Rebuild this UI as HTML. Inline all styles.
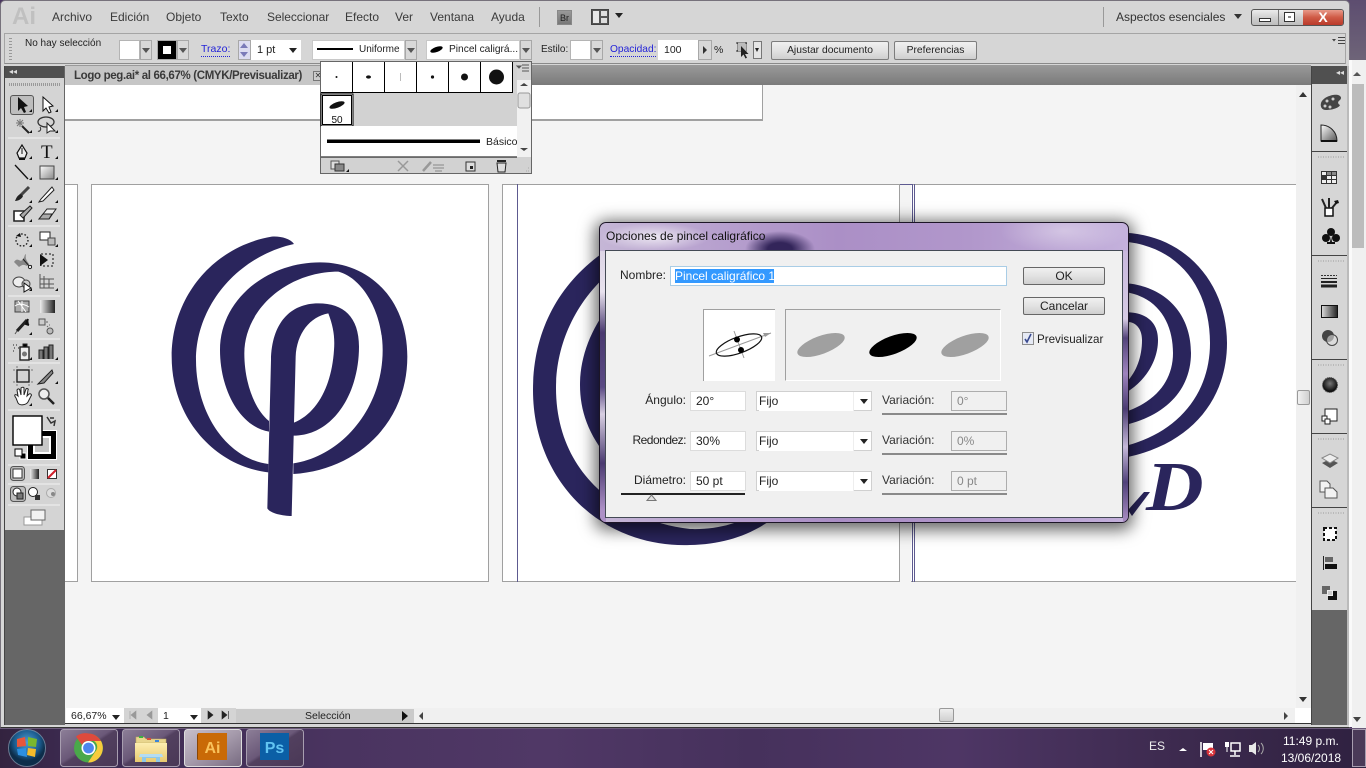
<!DOCTYPE html>
<html lang="es"><head><meta charset="utf-8"><title>Adobe Illustrator</title>
<style>
*{box-sizing:border-box}
html,body{margin:0;padding:0;width:1366px;height:768px;overflow:hidden;background:#4a3560;font-family:"Liberation Sans",sans-serif;color:#222}
.a{position:absolute}
.t{position:absolute;white-space:nowrap;line-height:14px}
.m{position:absolute;top:10px;font-size:12px;color:#3a3a3a;line-height:14px;white-space:nowrap}
.box{position:absolute;background:#fff;border:1px solid #b4b4b4}
.arr{position:absolute;background:#d8d8d8;border:1px solid #a8a8a8}
.tri{position:absolute;width:0;height:0;border-left:4px solid transparent;border-right:4px solid transparent;border-top:5px solid #222}
.btn{position:absolute;background:linear-gradient(#f0f0f0,#e2e2e2 50%,#cfcfcf);border:1px solid #7d7d7d;border-radius:2px;text-align:center;font-size:10.3px;line-height:17px;color:#222}
.dlg{position:absolute;font-size:12px;color:#222;line-height:14px;white-space:nowrap}
.inp{position:absolute;background:#fff;border:1px solid #dcdcdc;font-size:12px;line-height:19px;padding-left:5px;height:20px;color:#222}
.cell{position:absolute;top:62px;width:32px;height:31px;background:#fff;border-right:1px solid #000;border-bottom:1px solid #000}
</style></head><body>

<!-- desktop behind -->
<div class="a" style="left:1340px;top:0;width:26px;height:60px;background:linear-gradient(#5d4d70,#6e6478)"></div>
<div class="a" style="left:1352px;top:60px;width:14px;height:668px;background:#f0f0f0"></div>
<div class="a" style="left:1352px;top:84px;width:12px;height:164px;background:#bcbcbc"></div>
<div class="tri" style="left:1353px;top:72px;border-top:0;border-bottom:4px solid #555;border-left-width:4px;border-right-width:4px"></div>
<div class="tri" style="left:1353px;top:717px;border-top-color:#444"></div>

<!-- window -->
<div class="a" style="left:0;top:0;width:1350px;height:728px;background:#d6d6d6;border:1px solid #77727c;border-radius:5px 5px 0 0;border-bottom:1px solid #333"></div>
<div class="a" style="left:1349px;top:60px;width:3px;height:667px;background:#fafafa"></div>

<!-- menu bar -->
<div class="t" style="left:12px;top:4px;font-size:24px;line-height:26px;font-weight:bold;color:#c0c0c0">Ai</div>
<div class="m" style="left:52px">Archivo</div>
<div class="m" style="left:110px">Edición</div>
<div class="m" style="left:166px">Objeto</div>
<div class="m" style="left:220px">Texto</div>
<div class="m" style="left:267px;letter-spacing:-.05px">Seleccionar</div>
<div class="m" style="left:345px">Efecto</div>
<div class="m" style="left:395px">Ver</div>
<div class="m" style="left:430px">Ventana</div>
<div class="m" style="left:491px">Ayuda</div>
<div class="a" style="left:539px;top:7px;width:1px;height:20px;background:#999"></div>
<div class="t" style="left:557px;top:10px;width:15px;height:15px;background:linear-gradient(#999,#777);font-size:9px;line-height:14px;text-align:center;color:#222;border:1px solid #888">Br</div>
<div class="a" style="left:591px;top:9px;width:18px;height:16px;background:#555;border:1px solid #444"></div>
<div class="a" style="left:593px;top:11px;width:6px;height:12px;background:#e8e8e8"></div>
<div class="a" style="left:601px;top:11px;width:6px;height:5px;background:#ddd"></div>
<div class="a" style="left:601px;top:18px;width:6px;height:5px;background:#ddd"></div>
<div class="tri" style="left:615px;top:13px"></div>
<div class="a" style="left:1103px;top:7px;width:1px;height:20px;background:#999"></div>
<div class="m" style="left:1116px;color:#333;font-size:12px">Aspectos esenciales</div>
<div class="tri" style="left:1234px;top:14px;border-top-color:#333"></div>
<!-- window buttons -->
<div class="a" style="left:1251px;top:9px;width:93px;height:17px;background:linear-gradient(#ececec,#d0d0d0 50%,#bdbdbd);border:1px solid #555;border-radius:3px;overflow:hidden">
 <div class="a" style="left:26px;top:0;width:1px;height:15px;background:#777"></div>
 <div class="a" style="left:51px;top:0;width:40px;height:15px;background:linear-gradient(#e89a8a,#cf5a45 50%,#b93a2a)"></div>
 <div class="a" style="left:7px;top:8px;width:12px;height:4px;background:#fff;border:1px solid #333"></div>
 <div class="a" style="left:32px;top:2px;width:11px;height:10px;background:#fff;border:1px solid #333"></div>
 <div class="a" style="left:36px;top:6px;width:3px;height:2px;background:#888"></div>
 <div class="t" style="left:51px;top:0;width:40px;text-align:center;font-size:14px;line-height:15px;font-weight:bold;color:#fff">X</div>
</div>

<!-- control bar -->
<div class="a" style="left:4px;top:33px;width:1342px;height:31px;background:#d6d6d6;border:1px solid #a5a5a5;border-bottom:1px solid #8a8a8a"></div>
<div class="a" style="left:9px;top:38px;width:3px;height:22px;background:repeating-linear-gradient(#999 0 1px,transparent 1px 3px)"></div>
<div class="t" style="left:25px;top:37px;font-size:10px">No hay selección</div>
<div class="box" style="left:119px;top:40px;width:21px;height:20px"></div>
<div class="arr" style="left:140px;top:40px;width:12px;height:20px"></div><div class="tri" style="left:142px;top:48px;border-top-color:#555"></div>
<div class="a" style="left:157px;top:40px;width:20px;height:20px;background:#000;border:1px solid #aaa"></div>
<div class="a" style="left:163px;top:46px;width:8px;height:8px;background:#fff"></div>
<div class="arr" style="left:177px;top:40px;width:12px;height:20px"></div><div class="tri" style="left:179px;top:48px;border-top-color:#555"></div>
<div class="t" style="left:201px;top:43px;font-size:10.5px;color:#2323d8;border-bottom:1px dotted #2323d8;line-height:13px">Trazo:</div>
<div class="arr" style="left:238px;top:40px;width:13px;height:20px;background:#dcdcf0"></div>
<div class="tri" style="left:240px;top:43px;border-top:0;border-bottom:5px solid #7a7ab8"></div>
<div class="tri" style="left:240px;top:52px;border-top-color:#7a7ab8"></div>
<div class="a" style="left:251px;top:40px;width:50px;height:20px;background:#fff"></div>
<div class="t" style="left:257px;top:43px;font-size:11px">1 pt</div>
<div class="tri" style="left:289px;top:48px"></div>
<div class="box" style="left:312px;top:40px;width:93px;height:20px;border-color:#c8c8c8"></div>
<div class="a" style="left:317px;top:48px;width:36px;height:2px;background:#000"></div>
<div class="t" style="left:359px;top:43px;font-size:10px">Uniforme</div>
<div class="arr" style="left:405px;top:40px;width:12px;height:20px"></div><div class="tri" style="left:407px;top:48px;border-top-color:#555"></div>
<div class="box" style="left:426px;top:40px;width:94px;height:20px;border-color:#c8c8c8"></div>
<div class="a" style="left:430px;top:47px;width:13px;height:5px;border-radius:50%;background:#000;transform:rotate(-20deg)"></div>
<div class="t" style="left:449px;top:43px;font-size:10.2px">Pincel caligrá...</div>
<div class="arr" style="left:520px;top:40px;width:12px;height:20px"></div><div class="tri" style="left:522px;top:48px;border-top-color:#555"></div>
<div class="t" style="left:541px;top:43px;font-size:10px">Estilo:</div>
<div class="box" style="left:570px;top:40px;width:21px;height:20px"></div>
<div class="arr" style="left:591px;top:40px;width:12px;height:20px"></div><div class="tri" style="left:593px;top:48px;border-top-color:#555"></div>
<div class="t" style="left:610px;top:43px;font-size:10.2px;color:#2323d8;border-bottom:1px dotted #2323d8;line-height:13px">Opacidad:</div>
<div class="a" style="left:658px;top:40px;width:40px;height:20px;background:#fff"></div>
<div class="t" style="left:664px;top:43px;font-size:10.5px">100</div>
<div class="arr" style="left:698px;top:40px;width:14px;height:20px"></div>
<div class="a" style="left:703px;top:46px;width:0;height:0;border-top:4px solid transparent;border-bottom:4px solid transparent;border-left:4px solid #333"></div>
<div class="t" style="left:714px;top:43px;font-size:10.5px">%</div>
<svg class="a" style="left:733px;top:40px" width="20" height="22" viewBox="733 40 20 22">
 <rect x="737.500" y="42.500" width="9" height="9" fill="#bbb" stroke="#555" stroke-dasharray="1 1"/>
 <path d="M736 43h2M745 43h2M736 51h2" stroke="#333"/>
 <path d="M741 46v11l2.500-2.500 2 4 1.500-.8-2-3.700h3.500z" fill="#222"/>
</svg>
<div class="a" style="left:753px;top:41px;width:9px;height:18px;background:#e5e5e5;border:1px solid #777"></div><div class="tri" style="left:755px;top:48px;border-left-width:2.5px;border-right-width:2.5px;border-top-width:4px"></div>
<div class="btn" style="left:771px;top:41px;width:118px;height:19px">Ajustar documento</div>
<div class="btn" style="left:894px;top:41px;width:83px;height:19px">Preferencias</div>
<svg class="a" style="left:1330px;top:34px" width="16" height="14"><path d="M2 5h4l-2 2.500z" fill="#444"/><path d="M8 3.500h7M8 6.500h7M8 9.500h7" stroke="#444"/></svg>

<!-- tab bar -->
<div class="a" style="left:65px;top:65px;width:1246px;height:20px;background:linear-gradient(#9a9a9a,#7a7a7a)"></div>
<div class="a" style="left:65px;top:66px;width:260px;height:19px;background:#c6c6c6"></div>
<div class="t" style="left:74px;top:69px;font-size:11.5px;font-weight:bold;color:#3a3a3a;letter-spacing:-.03em">Logo peg.ai* al 66,67% (CMYK/Previsualizar)</div>
<div class="a" style="left:313px;top:71px;width:10px;height:10px;border:1px solid #777;background:#ccc;font-size:8px;line-height:8px;text-align:center;color:#333">✕</div>

<!-- document area -->
<div class="a" style="left:65px;top:85px;width:1231px;height:623px;background:#f4f4f4;overflow:hidden">
 <div class="a" style="left:-1px;top:-1px;width:699px;height:37px;background:#fff;border:1px solid #a0a0a0;border-bottom-width:2px"></div>
 <div class="a" style="left:-1px;top:99px;width:14px;height:398px;background:#fff;border:1px solid #a0a0a0;border-left:0"></div>
 <div class="a" style="left:26px;top:99px;width:398px;height:398px;background:#fff;border:1px solid #a0a0a0"></div>
 <div class="a" style="left:437px;top:99px;width:398px;height:398px;background:#fff;border:1px solid #a0a0a0"></div>
 <div class="a" style="left:846px;top:99px;width:402px;height:398px;background:#fff;border:1px solid #a0a0a0;border-left:0;border-right:0"></div>
 <div class="a" style="left:452px;top:99px;width:1px;height:398px;background:#5d5a90"></div>
 <div class="a" style="left:835px;top:99px;width:12px;height:1px;background:#5d5a90"></div>
 <div class="a" style="left:847px;top:99px;width:1px;height:398px;background:#5d5a90"></div>
 <div class="a" style="left:849px;top:99px;width:1px;height:398px;background:#5d5a90"></div>
</div>

<!-- artwork -->
<svg class="a" style="left:0;top:0" width="1296" height="708" viewBox="0 0 1296 708">
 <g fill="#2a255c">
  <g transform="translate(130 210) scale(.33333)">
   <path d="M492,102C480,85 450,78 425,80C250,110 125,260 125,440C125,630 260,770 415,787L415,762C290,745 198,610 198,450C198,290 320,140 492,102Z"/>
   <path d="M490,792C680,780 832,640 832,440C832,270 720,157 570,157C410,157 270,270 270,420C270,540 330,650 417,665L417,633C375,600 343,520 343,430C343,300 470,185 625,185C700,205 758,310 758,420C758,600 630,740 490,760Z"/>
   <path d="M490,677C610,677 687,550 687,410C687,320 640,280 565,280C480,280 425,340 423,450L412,895C420,910 460,918 485,918L492,638L497,440C500,370 540,320 595,310C610,350 615,380 612,420C605,530 560,610 492,638Z"/>
  </g>
  <!-- middle logo, visible behind dialog -->
  <path d="M610,248C560,280 533,330 533,390C533,480 600,548 690,545C730,544 760,532 790,505L770,505C745,522 720,530 690,529C615,520 556,470 556,388C556,345 575,300 615,268Z"/>
  <path d="M610,305C590,330 580,358 580,385C580,410 588,435 610,460L610,430C603,415 600,400 600,385C600,365 603,350 610,335Z"/>
  <!-- right logo -->
  <path d="M1110,233C1180,228 1227,280 1227,343C1227,400 1190,450 1110,460L1110,449C1170,440 1210,400 1210,343C1210,285 1175,240 1110,241Z"/>
  <path d="M1110,283C1160,280 1191,310 1191,353C1191,390 1165,420 1110,428L1110,416C1150,408 1173,385 1173,353C1173,320 1155,290 1110,291Z"/>
  <path d="M1110,314C1140,308 1158,318 1158,340C1158,365 1140,390 1110,400L1110,394C1130,385 1142,365 1142,340C1142,328 1135,322 1128,322L1110,326Z"/>
  <path d="M1132,516L1150,492L1144,492L1128,510Z"/>
 </g>
 <text x="0" y="0" transform="translate(1146 510) scale(1.14 1)" font-family="Liberation Serif,serif" font-style="italic" font-weight="bold" font-size="70" fill="#2a255c">D</text>
</svg>

<!-- vertical scrollbar -->
<div class="a" style="left:1296px;top:85px;width:15px;height:623px;background:#f0f0f0"></div>
<div class="tri" style="left:1299px;top:92px;border-top:0;border-bottom:5px solid #333"></div>
<div class="tri" style="left:1299px;top:697px;border-top-color:#333"></div>
<div class="a" style="left:1297px;top:390px;width:13px;height:15px;background:linear-gradient(90deg,#f2f2f2,#d0d0d0);border:1px solid #9a9a9a;border-radius:2px"></div>

<!-- status bar -->
<div class="a" style="left:65px;top:708px;width:1246px;height:16px;background:#f0f0f0;border-bottom:1px solid #333"></div>
<div class="a" style="left:66px;top:708px;width:58px;height:15px;background:#fff"></div>
<div class="t" style="left:71px;top:709px;font-size:10.5px">66,67%</div>
<div class="tri" style="left:112px;top:715px"></div>
<div class="a" style="left:124px;top:708px;width:34px;height:15px;background:#d4d4d4"></div>
<div class="a" style="left:158px;top:708px;width:43px;height:15px;background:#fff"></div>
<div class="t" style="left:163px;top:709px;font-size:10.5px">1</div>
<div class="tri" style="left:190px;top:715px"></div>
<div class="a" style="left:201px;top:708px;width:35px;height:15px;background:#d4d4d4"></div>
<svg class="a" style="left:124px;top:708px" width="112" height="15" viewBox="124 708 112 15">
 <path d="M130 711v8M136 711v8l-5-4zM152 711v8l-5-4z" fill="#999" stroke="#999" stroke-width=".6"/>
 <path d="M208 711v8l5-4zM222 711v8l5-4zM228.500 711v8" fill="#222" stroke="#222" stroke-width=".6"/>
</svg>
<div class="a" style="left:236px;top:709px;width:178px;height:14px;background:#cacaca"></div>
<div class="t" style="left:305px;top:709px;font-size:10.5px">Selección</div>
<div class="a" style="left:402px;top:711px;width:0;height:0;border-top:5px solid transparent;border-bottom:5px solid transparent;border-left:6px solid #111"></div>
<div class="a" style="left:419px;top:712px;width:0;height:0;border-top:4px solid transparent;border-bottom:4px solid transparent;border-right:4px solid #444"></div>
<div class="a" style="left:1284px;top:712px;width:0;height:0;border-top:4px solid transparent;border-bottom:4px solid transparent;border-left:4px solid #444"></div>
<div class="a" style="left:939px;top:708px;width:15px;height:14px;background:linear-gradient(#eee,#cfcfcf);border:1px solid #999;border-radius:2px"></div>
<div class="a" style="left:1295px;top:708px;width:16px;height:16px;background:#fff;border-bottom:1px solid #333"></div>

<!-- left toolbar -->
<div class="a" style="left:4px;top:66px;width:61px;height:659px;background:#666;border-left:1px solid #444"></div>
<div class="a" style="left:5px;top:66px;width:59px;height:12px;background:#505050"></div>
<div class="t" style="left:9px;top:66px;font-size:8px;line-height:12px;color:#ddd">◂◂</div>
<div class="a" style="left:5px;top:78px;width:59px;height:452px;background:#d4d4d4"></div>
<div class="a" style="left:9px;top:83px;width:51px;height:3px;background:repeating-linear-gradient(90deg,#999 0 1px,transparent 1px 2px)"></div>
<div class="a" style="left:10px;top:95px;width:24px;height:20px;background:#bdbdbd;border:1px solid #555;border-radius:3px"></div>

<svg class="a" style="left:0;top:0" width="70" height="540" viewBox="0 0 70 540">
 <g stroke="#f2f2f2" stroke-width="1">
  <path d="M8 138H60M8 226H60M8 296H60M8 339H60M8 363H60M8 410H60M8 465H60M8 484H60M8 505H60"/>
 </g>
 <g fill="#111" stroke="none">
  <path d="M18 97L18 111L21 108L24 113L26 112L24 107L28 106Z"/>
  <path d="M43 97L43 111L46 108L49 113L51 112L49 107L53 106Z" fill="#fff" stroke="#111"/>
  <path d="M29 112h3v-3zM55 112h3v-3zM29 133h3v-3zM55 133h3v-3zM29 159h3v-3zM55 159h3v-3zM29 180h3v-3zM55 180h3v-3zM29 203h3v-3zM55 203h3v-3zM55 222h3v-3zM29 222h3v-3zM29 247h3v-3zM55 247h3v-3zM29 268h3v-3zM29 291h3v-3zM55 291h3v-3zM29 335h3v-3zM29 360h3v-3zM55 360h3v-3zM55 384h3v-3zM29 406h3v-3z"/>
 </g>
 <!-- wand, lasso -->
 <path d="M22 126L29 133" stroke="#222" stroke-width="2"/>
 <path d="M20 119v8M16 123h8M17 120l6 6M23 120l-6 6" stroke="#777" stroke-width="1"/>
 <ellipse cx="46" cy="122" rx="8" ry="5" fill="none" stroke="#333" stroke-width="1.3"/>
 <path d="M40 127c2 3-1 5-2 4" fill="none" stroke="#333"/>
 <path d="M47 123l0 10 3-2 5 0z" fill="#fff" stroke="#222"/>
 <!-- pen, T -->
 <path d="M22 145L17 153L19 158H25L27 153Z" fill="#eee" stroke="#111" stroke-width="1.2"/>
 <path d="M22 148V154" stroke="#111"/><rect x="19" y="158" width="6" height="2" fill="#111"/>
 <text x="41" y="158" font-family="Liberation Serif,serif" font-size="19" fill="#111">T</text>
 <!-- line, rect -->
 <path d="M15 165L28 179" stroke="#111" stroke-width="1.3"/>
 <rect x="40" y="166" width="14" height="13" fill="url(#g1)" stroke="#444"/>
 <!-- brush, pencil -->
 <path d="M29 187L20 196" stroke="#444" stroke-width="3"/><path d="M21 194c-4 1-5 5-6 7c3 0 7-2 8-5z" fill="#222"/>
 <path d="M52 187L41 199L39 202L43 201L54 190Z" fill="#fff" stroke="#222"/>
 <!-- blob, eraser -->
 <path d="M14 211H24V221H14Z" fill="#fff" stroke="#222" stroke-width="1.6"/><path d="M20 215L30 206L32 208L23 218Z" fill="#aaa" stroke="#222"/>
 <path d="M39 219L47 209H56L49 219Z" fill="#eee" stroke="#222"/><path d="M39 219L43 214H52L49 219Z" fill="#aaa" stroke="#222"/>
 <!-- rotate, scale -->
 <circle cx="22" cy="240" r="6" fill="none" stroke="#222" stroke-dasharray="1.6 1.8" stroke-width="1.4"/><path d="M16 236l4-3 1 4z" fill="#111"/>
 <rect x="40" y="232" width="10" height="8" fill="#fff" stroke="#222"/><rect x="48" y="238" width="7" height="7" fill="#bbb" stroke="#444"/>
 <!-- warp, free transform -->
 <path d="M14 262c4-6 6 2 9-3c2-2 1-4 3-5c-1 5 1 7 3 10l-2 2c-4-2-5-1-8 1z" fill="#888"/><path d="M23 259l7 8" stroke="#222"/><circle cx="30" cy="267" r="1.6" fill="#fff" stroke="#222"/>
 <rect x="41" y="254" width="12" height="12" fill="none" stroke="#111" stroke-dasharray="2 2"/><path d="M40 254v12l8-6z" fill="#111"/>
 <!-- shape builder, perspective -->
 <ellipse cx="19" cy="282" rx="6" ry="5" fill="#eee" stroke="#444"/><circle cx="26" cy="284" r="4" fill="#ccc" stroke="#444"/><path d="M24 283l0 9 7-4z" fill="#fff" stroke="#111"/>
 <path d="M40 274v14h14M44 276v12M49 279v9M40 279h14M40 284h14" fill="none" stroke="#555"/>
 <!-- mesh, gradient -->
 <rect x="15" y="301" width="14" height="11" fill="#aaa" stroke="#444"/><path d="M15 306c4-3 9-2 14 1M22 301v11M18 301l8 11" fill="none" stroke="#fff"/>
 <rect x="40" y="300" width="15" height="13" fill="url(#g2)"/>
 <!-- eyedropper, blend -->
 <path d="M27 320L17 331" stroke="#222" stroke-width="3"/><path d="M28 319l-2 5 3 1" fill="#111" stroke="#111" stroke-width="2"/><path d="M17 331l-2 3" stroke="#555"/>
 <rect x="39" y="319" width="6" height="6" fill="#ccc" stroke="#555"/><circle cx="50" cy="331" r="3" fill="#bbb" stroke="#555"/><path d="M46 322h2M49 325h1M47 326l1 1" stroke="#666"/>
 <!-- spray, graph -->
 <rect x="20" y="347" width="9" height="13" fill="#eee" stroke="#222" stroke-width="1.4"/><circle cx="24.500" cy="354" r="2.500" fill="#777"/><path d="M23 344h4v3h-4zM13 345h1M16 345h1M14 348h1M18 348h1M13 351h1" stroke="#222"/>
 <path d="M39 359V350h4V359M44 359V347h4V359M49 359V345h4V359" fill="#777" stroke="#222"/>
 <!-- artboard, slice -->
 <rect x="17" y="370" width="12" height="12" fill="none" stroke="#222" stroke-width="1.4"/><path d="M15 370h-2M33 370h-2M15 382h-2M33 382h-2M17 368v-2M29 368v-2M17 386v-2M29 386v-2" stroke="#777"/>
 <path d="M52 370L40 382L38 384L44 383L53 373Z" fill="#888" stroke="#222"/>
 <!-- hand, zoom -->
 <path d="M16 398c-3-4 0-4 2-2l-1-6c1-2 3-1 3 1l1 4 0-7c1-1 3-1 3 0l0 7 2-6c1-1 3 0 2 1l-1 6 2-2c2-1 3 1 2 2l-3 6c-2 3-8 4-10 1z" fill="#fff" stroke="#222"/>
 <circle cx="44" cy="394" r="5" fill="#eee" stroke="#555" stroke-width="1.5"/><path d="M48 398l6 6" stroke="#222" stroke-width="2.500"/>
 <!-- fill stroke -->
 <rect x="27.500" y="430.500" width="29" height="29" fill="#000" stroke="#fff"/>
 <rect x="34" y="437" width="16" height="16" fill="#c8c8c8" stroke="#fff" stroke-width="2"/>
 <rect x="13" y="416" width="29" height="29" fill="#fff" stroke="#000" stroke-width="1.400"/>
 <path d="M47 417l4 6 4-2 -1 5M50 418l4 0" fill="none" stroke="#333" stroke-width="1.500"/>
 <rect x="20" y="453" width="6" height="6" fill="#000" stroke="#fff"/><rect x="15" y="449" width="7" height="7" fill="#fff" stroke="#000"/>
 <!-- color modes -->
 <rect x="10.500" y="466.500" width="14" height="14" rx="3" fill="#bdbdbd" stroke="#555"/><rect x="13" y="469" width="9" height="9" fill="#fff" stroke="#333"/>
 <rect x="30" y="469" width="9" height="10" fill="url(#g2)"/>
 <rect x="47.500" y="469.500" width="9" height="9" fill="#fff" stroke="#333"/><path d="M48 478L56 470" stroke="#d0202a" stroke-width="2"/>
 <!-- draw modes -->
 <rect x="10.500" y="486.500" width="15" height="15" rx="3" fill="#bdbdbd" stroke="#555"/>
 <circle cx="17" cy="492" r="4" fill="#fff" stroke="#222"/><rect x="17" y="493" width="6" height="6" fill="#777" stroke="#222"/>
 <circle cx="33" cy="492" r="4.500" fill="#fff" stroke="#222"/><rect x="35" y="495" width="5" height="5" fill="#333"/>
 <circle cx="51" cy="493" r="4.500" fill="#ddd" stroke="#aaa"/><circle cx="53" cy="494" r="2" fill="#888"/>
 <!-- screen mode -->
 <rect x="24" y="517" width="18" height="8" fill="#fff" stroke="#999"/><rect x="31" y="510" width="14" height="10" fill="#f2f2f2" stroke="#666"/>
 <defs>
  <linearGradient id="g1" x1="0" y1="0" x2="1" y2="1"><stop offset="0" stop-color="#fff"/><stop offset="1" stop-color="#888"/></linearGradient>
  <linearGradient id="g2"><stop offset="0" stop-color="#eee"/><stop offset="1" stop-color="#222"/></linearGradient>
 </defs>
</svg>

<!-- right dock -->
<div class="a" style="left:1311px;top:66px;width:37px;height:659px;background:#666;border-left:1px solid #444"></div>
<div class="a" style="left:1312px;top:66px;width:36px;height:18px;background:#505050"></div>
<div class="t" style="left:1336px;top:67px;font-size:8px;line-height:12px;color:#ddd">◂◂</div>
<div class="a" style="left:1312px;top:84px;width:35px;height:526px;background:#d6d6d6"></div>
<div class="a" style="left:1347px;top:66px;width:2px;height:659px;background:#bbb"></div>
<div class="a" style="left:1312px;top:151px;width:35px;height:1px;background:#444"></div>
<div class="a" style="left:1312px;top:255px;width:35px;height:1px;background:#444"></div>
<div class="a" style="left:1312px;top:359px;width:35px;height:1px;background:#444"></div>
<div class="a" style="left:1312px;top:433px;width:35px;height:1px;background:#444"></div>
<div class="a" style="left:1312px;top:507px;width:35px;height:1px;background:#444"></div>
<svg class="a" style="left:1312px;top:84px" width="36" height="530" viewBox="1312 84 36 530">
 <defs>
  <linearGradient id="g3" x1="0" y1="0" x2="1" y2="1"><stop offset="0" stop-color="#fff"/><stop offset="1" stop-color="#555"/></linearGradient>
  <linearGradient id="g4"><stop offset="0" stop-color="#222"/><stop offset="1" stop-color="#ddd"/></linearGradient>
  <radialGradient id="g5" cx=".5" cy=".4"><stop offset="0" stop-color="#777"/><stop offset="1" stop-color="#111"/></radialGradient>
 </defs>
 <path d="M1318 157h27M1318 261h27M1318 365h27M1318 439h27M1318 513h27" stroke="#999" stroke-dasharray="1 1.500" stroke-width="1"/>
 <!-- palette -->
 <path d="M1321 103c2-6 12-9 17-8c3 1 4 3 2 5c-3 2-2 4 0 5c-1 3-8 5-14 5c-4 0-6-3-5-7z" fill="#444"/>
 <circle cx="1333" cy="99" r="1.500" fill="#ccc"/><circle cx="1327" cy="101" r="1.500" fill="#ccc"/><circle cx="1325" cy="106" r="1.500" fill="#ccc"/><circle cx="1330" cy="107" r="1.500" fill="#ccc"/>
 <!-- color guide -->
 <path d="M1321 125v16h16c0-9-7-16-16-16z" fill="url(#g3)" stroke="#222"/><path d="M1321 141h16" stroke="#111" stroke-width="2"/>
 <!-- swatches -->
 <rect x="1321" y="171" width="16" height="13" fill="#333"/>
 <path d="M1326 172v3h-4v-3zM1331 176v3h-4v-3zM1336 176v3h-4v-3zM1326 180v3h-4v-3zM1331 180v3h-4v-3zM1336 180v3h-4v-3z" fill="#eee"/>
 <path d="M1327 172h4v3h-4zM1332 172h4v3h-4z" fill="#888"/>
 <!-- brushes -->
 <rect x="1325" y="208" width="8" height="8" fill="#fff" stroke="#111" stroke-width="1.500"/>
 <path d="M1329 198v10M1322 199l4 9M1337 202l-5 6" stroke="#222" stroke-width="2"/><path d="M1334 201l4-1 1 3-3 1z" fill="#111"/>
 <!-- club -->
 <circle cx="1331" cy="232" r="4" fill="#111"/><circle cx="1326" cy="238" r="4" fill="#111"/><circle cx="1336" cy="238" r="4" fill="#111"/><path d="M1331 236l-1 6h-3v2h8v-2h-3z" fill="#111"/>
 <!-- stroke -->
 <path d="M1321 275.500h16" stroke="#333" stroke-dasharray="2 1"/><path d="M1321 278.500h16" stroke="#222"/><path d="M1321 282h16" stroke="#222" stroke-width="2"/><path d="M1321 286h16" stroke="#222" stroke-width="3"/>
 <!-- gradient -->
 <rect x="1321.500" y="305.500" width="16" height="12" fill="url(#g4)" stroke="#111" transform="matrix(-1 0 0 1 2659 0)"/>
 <!-- transparency -->
 <circle cx="1328" cy="336" r="6" fill="#444"/><circle cx="1332" cy="340" r="5.500" fill="#ddd" fill-opacity=".6" stroke="#444"/>
 <!-- appearance -->
 <circle cx="1330" cy="385" r="7.500" fill="url(#g5)" stroke="#555" stroke-dasharray="1 1"/>
 <!-- graphic styles -->
 <rect x="1325" y="409" width="12" height="12" fill="#fff" stroke="#222"/><rect x="1322" y="416" width="5" height="5" fill="#fff" stroke="#222"/><rect x="1325" y="419" width="5" height="5" fill="#fff" stroke="#222"/>
 <!-- layers -->
 <path d="M1322 463l8-4 8 4-8 5z" fill="#555"/><path d="M1322 458l8-4 8 4-8 5z" fill="#eee" stroke="#888"/>
 <!-- artboards -->
 <path d="M1320 481h7l3 3v8h-10z" fill="#f2f2f2" stroke="#555"/><path d="M1325 488h8l4 4v6h-12z" fill="#f2f2f2" stroke="#555"/>
 <!-- transform -->
 <rect x="1324" y="528" width="12" height="12" fill="#fff" stroke="#111" stroke-dasharray="3 2" stroke-width="2"/>
 <!-- align -->
 <path d="M1323.500 556v14" stroke="#222"/><rect x="1325" y="557" width="8" height="5" fill="#666"/><rect x="1325" y="564" width="12" height="5" fill="#111"/>
 <!-- pathfinder -->
 <rect x="1322" y="586" width="8" height="8" fill="#666"/><rect x="1328" y="591" width="9" height="9" fill="#111"/><rect x="1327.500" y="590.500" width="5" height="5" fill="#ccc" stroke="#eee"/>
</svg>

<!-- brush popup -->
<div class="a" style="left:320px;top:61px;width:212px;height:113px;background:#fff;border:1px solid #666"></div>
<div class="a" style="left:321px;top:62px;width:196px;height:95px;background:#d2d2d2"></div>
<div class="cell" style="left:321px"></div><div class="cell" style="left:353px"></div><div class="cell" style="left:385px"></div><div class="cell" style="left:417px"></div><div class="cell" style="left:449px"></div><div class="cell" style="left:481px"></div>
<svg class="a" style="left:320px;top:61px" width="212" height="113" viewBox="320 61 212 113">
 <circle cx="336.500" cy="77" r="1" fill="#111"/>
 <ellipse cx="368.500" cy="77" rx="2.500" ry="1.600" fill="#111"/>
 <path d="M400.500 73v8" stroke="#bbb"/>
 <circle cx="432.500" cy="77" r="1.600" fill="#111"/>
 <circle cx="464.500" cy="77" r="3.500" fill="#111"/>
 <circle cx="496.500" cy="77" r="7.500" fill="#111"/>
 <rect x="321" y="94" width="32" height="32" fill="#fff" stroke="#000"/>
 <rect x="322.500" y="95.500" width="29" height="29" fill="#fff" stroke="#000"/>
 <ellipse cx="337" cy="105" rx="8" ry="2.800" fill="#111" transform="rotate(-20 337 105)"/>
 <text x="337" y="123" text-anchor="middle" font-family="Liberation Sans,sans-serif" font-size="10" fill="#111">50</text>
 <rect x="321" y="126" width="196" height="31" fill="#fff"/>
 <rect x="327" y="139.500" width="153" height="3.500" fill="#000"/>
 <text x="486" y="145" font-family="Liberation Sans,sans-serif" font-size="10.500" fill="#222">Básico</text>
 <rect x="517" y="62" width="14" height="96" fill="#f1f1f1"/>
 <rect x="517" y="62" width="14" height="18" fill="#d6d6d6"/>
 <path d="M517 66l2 2 2-2zM522 65h7M522 68h7M522 71h7" fill="#555" stroke="#555"/>
 <path d="M520 86l4-3 4 3z" fill="#444"/>
 <rect x="518" y="93" width="12" height="15" rx="2" fill="#e0e0e0" stroke="#999"/>
 <path d="M520 148l4 3 4-3z" fill="#444"/>
 <rect x="321" y="157" width="210" height="16" fill="#d2d2d2"/>
 <path d="M321 157h196" stroke="#000"/>
 <rect x="331" y="161" width="8" height="8" fill="#ddd" stroke="#555"/><rect x="335" y="164" width="9" height="7" fill="#888" stroke="#333"/><path d="M346 172h3v-3z" fill="#111"/>
 <path d="M398 161l10 10M408 161l-10 10" stroke="#999" stroke-width="1.500"/>
 <path d="M423 171l8-9" stroke="#999" stroke-width="2.500"/><path d="M433 165h11M433 168h11M435 171h7" stroke="#888"/>
 <rect x="466" y="162" width="9" height="9" fill="#ddd" stroke="#333"/><rect x="470" y="166" width="3" height="3" fill="#222"/>
 <path d="M497 163h9l-1 9h-7z" fill="#ddd" stroke="#222"/><path d="M497 161h9" stroke="#222" stroke-width="2"/>
 <path d="M526 171h1M528 171h1M528 168h1" stroke="#aaa"/>
</svg>

<!-- dialog -->
<div class="a" style="left:599px;top:222px;width:530px;height:301px;border-radius:7px;border:1px solid #1c1526;box-shadow:0 3px 16px 4px rgba(0,0,0,.6);overflow:hidden;background:linear-gradient(90deg,#c5b6d6 0,#b8a2cf 20%,#ab8fc6 45%,#b197cb 70%,#c4b1dc 100%)">
 <div class="a" style="left:0;top:0;width:110px;height:28px;background:radial-gradient(closest-side,rgba(255,255,255,.7),rgba(255,255,255,0))"></div>
 <div class="a" style="left:145px;top:8px;width:70px;height:36px;background:radial-gradient(closest-side,#33255a 35%,rgba(50,35,90,0))"></div>
 <div class="a" style="left:400px;top:-14px;width:128px;height:44px;background:radial-gradient(closest-side,rgba(255,255,255,.35),rgba(255,255,255,0))"></div>
 <div class="a" style="left:0;top:28px;width:6px;height:272px;background:linear-gradient(#ddd5e6 0,#e8e2ee 15%,#4a3a70 30%,#5a4a84 50%,#d8cfe2 60%,#4a3a70 78%,#ad90c6 95%)"></div>
 <div class="a" style="left:523px;top:28px;width:6px;height:272px;background:linear-gradient(#c9b8de 0,#d6cbe4 25%,#53437a 32%,#9e84be 45%,#4b3c72 58%,#c6b9da 72%,#50417a 85%,#ad90c6 100%)"></div>
 <div class="a" style="left:5px;top:27px;width:518px;height:268px;background:#f0f0f0;border:1px solid #444a55"></div>
</div>
<div class="dlg" style="left:606px;top:229px;color:#111">Opciones de pincel caligráfico</div>

<div class="dlg" style="left:620px;top:268px">Nombre:</div>
<div class="a" style="left:670px;top:266px;width:337px;height:20px;background:#fff;border:1px solid #a9cde6"></div>
<div class="dlg" style="left:675px;top:269px;width:99px;height:14px;background:#3399ff;color:#fff">Pincel caligráfico 1</div>

<div class="btn" style="left:1023px;top:267px;width:82px;height:18px;font-size:12px;line-height:16px;border-color:#666">OK</div>
<div class="btn" style="left:1023px;top:297px;width:82px;height:18px;font-size:12px;line-height:16px;border-color:#666">Cancelar</div>
<div class="a" style="left:1022px;top:332px;width:12px;height:13px;background:#e6eaf5;border:1px solid #8e8e8e"></div>
<svg class="a" style="left:1022px;top:332px" width="12" height="13"><path d="M3 7l2 3 4-8" fill="none" stroke="#3a4a8f" stroke-width="1.600"/></svg>
<div class="dlg" style="left:1037px;top:333px;font-size:11.6px">Previsualizar</div>

<div class="a" style="left:703px;top:309px;width:72px;height:72px;background:#fff;border-left:1px solid #a0a0a0;border-top:1px solid #a0a0a0"></div>
<div class="a" style="left:785px;top:309px;width:216px;height:72px;background:#f0f0f0;border:1px solid #fff;border-left:1px solid #a0a0a0;border-top:1px solid #a0a0a0"></div>
<svg class="a" style="left:700px;top:305px" width="305" height="80" viewBox="700 305 305 80">
 <ellipse cx="821" cy="345" rx="25" ry="9" fill="#a0a0a0" transform="rotate(-20 821 345)"/>
 <ellipse cx="893" cy="345" rx="25" ry="9" fill="#000" transform="rotate(-20 893 345)"/>
 <ellipse cx="965" cy="345" rx="25" ry="9" fill="#a0a0a0" transform="rotate(-20 965 345)"/>
 <path d="M709 356L771 333M734 331L744 358" stroke="#999" stroke-width="1"/>
 <path d="M771 333l-8 0 2 4z" fill="#999"/>
 <ellipse cx="739" cy="345" rx="24" ry="8" fill="none" stroke="#111" stroke-width="1.200" transform="rotate(-20 739 345)"/>
 <circle cx="737" cy="339.500" r="3" fill="#000"/><circle cx="741" cy="350" r="3" fill="#000"/>
</svg>

<!-- rows -->
<div class="dlg" style="left:600px;top:393px;width:86px;text-align:right">Ángulo:</div>
<div class="inp" style="left:690px;top:391px;width:56px">20°</div>
<div class="dlg" style="left:600px;top:433px;width:86px;text-align:right;letter-spacing:-.5px">Redondez:</div>
<div class="inp" style="left:690px;top:431px;width:56px">30%</div>
<div class="dlg" style="left:600px;top:473px;width:86px;text-align:right">Diámetro:</div>
<div class="inp" style="left:690px;top:471px;width:56px">50 pt</div>
<div class="a" style="left:621px;top:493px;width:124px;height:2px;background:#222"></div>
<svg class="a" style="left:646px;top:494px" width="11" height="8"><path d="M5.500 1L10 6.500H1Z" fill="#e0e0e0" stroke="#777"/></svg>

<div class="inp" style="left:756px;top:391px;width:116px;padding-left:2px;border-color:#d0d0d0"><span style="display:inline-block;width:95px;background:#fff;border-right:1px solid #eee">Fijo</span></div><div class="tri" style="left:860px;top:399px"></div>
<div class="inp" style="left:756px;top:431px;width:116px;padding-left:2px;border-color:#d0d0d0"><span style="display:inline-block;width:95px;background:#fff;border-right:1px solid #eee">Fijo</span></div><div class="tri" style="left:860px;top:439px"></div>
<div class="inp" style="left:756px;top:471px;width:116px;padding-left:2px;border-color:#d0d0d0"><span style="display:inline-block;width:95px;background:#fff;border-right:1px solid #eee">Fijo</span></div><div class="tri" style="left:860px;top:479px"></div>

<div class="dlg" style="left:882px;top:393px;color:#333">Variación:</div>
<div class="inp" style="left:951px;top:391px;width:56px;background:#f0f0f0;border-color:#adadad;color:#888">0°</div>
<div class="a" style="left:882px;top:413px;width:125px;height:2px;background:#8a8a8a"></div>
<div class="dlg" style="left:882px;top:433px;color:#333">Variación:</div>
<div class="inp" style="left:951px;top:431px;width:56px;background:#f0f0f0;border-color:#adadad;color:#888">0%</div>
<div class="a" style="left:882px;top:453px;width:125px;height:2px;background:#8a8a8a"></div>
<div class="dlg" style="left:882px;top:473px;color:#333">Variación:</div>
<div class="inp" style="left:951px;top:471px;width:56px;background:#f0f0f0;border-color:#adadad;color:#888">0 pt</div>
<div class="a" style="left:882px;top:493px;width:125px;height:2px;background:#8a8a8a"></div>

<!-- taskbar -->
<div class="a" style="left:0;top:728px;width:1366px;height:40px;background:linear-gradient(90deg,#33233f 0,#3c2a50 5%,#4a3460 25%,#503866 40%,#46315c 55%,#4e3665 70%,#3e2b50 85%,#2f2140 100%);border-top:1px solid #6b5a7a"></div>
<svg class="a" style="left:0;top:728px" width="1366" height="40" viewBox="0 728 1366 40">
 <defs>
  <radialGradient id="orb" cx=".5" cy=".35"><stop offset="0" stop-color="#4d9fd4"/><stop offset=".7" stop-color="#1a5a8c"/><stop offset="1" stop-color="#0d2d4a"/></radialGradient>
  <linearGradient id="tb" x1="0" y1="0" x2="1" y2="1"><stop offset="0" stop-color="#8d7f98"/><stop offset=".45" stop-color="#6a5878"/><stop offset=".5" stop-color="#52405f"/><stop offset="1" stop-color="#4a3856"/></linearGradient>
  <linearGradient id="tba" x1="0" y1="0" x2="1" y2="1"><stop offset="0" stop-color="#c8c0cc"/><stop offset=".5" stop-color="#a59aab"/><stop offset="1" stop-color="#776a80"/></linearGradient>
  <linearGradient id="fo" x1="0" y1="0" x2="0" y2="1"><stop offset="0" stop-color="#fdeeb0"/><stop offset="1" stop-color="#e8c96f"/></linearGradient>
 </defs>
 <circle cx="27" cy="748" r="18.500" fill="url(#orb)" stroke="#9ab0c4" stroke-opacity=".6"/>
 <path d="M17 739l8-2 1 9-9 1z" fill="#e8563a"/><path d="M28 737l9 2-1 8-8-1z" fill="#7ab82e"/><path d="M17 749l9-1 1 9-9-2z" fill="#2d8fe0"/><path d="M28 748l8 1-1 8-8-2z" fill="#f5bb2a"/>
 <rect x="60.500" y="729.500" width="57" height="37" rx="3" fill="url(#tb)" stroke="#a89eb0"/>
 <rect x="122.500" y="729.500" width="57" height="37" rx="3" fill="url(#tb)" stroke="#a89eb0"/>
 <rect x="184.500" y="729.500" width="57" height="37" rx="3" fill="url(#tba)" stroke="#ddd"/>
 <rect x="246.500" y="729.500" width="57" height="37" rx="3" fill="url(#tb)" stroke="#a89eb0"/>
 <!-- chrome -->
 <circle cx="88.500" cy="748" r="14.500" fill="#4aa84a"/>
 <path d="M88.500 733.500A14.500 14.500 0 0 1 101 741H88.500A7 7 0 0 0 82 745L76 736.500A14.500 14.500 0 0 1 88.500 733.500Z" fill="#de4a3c"/>
 <path d="M101 741A14.500 14.500 0 0 1 88 762.500L95 752A7 7 0 0 0 94 741Z" fill="#f8cc3c"/>
 <circle cx="88.500" cy="748" r="7" fill="#fff"/><circle cx="88.500" cy="748" r="5.400" fill="#4d86ec"/>
 <!-- folder -->
 <path d="M136 737h8l2 2h20v4h-30z" fill="#e9d68e" stroke="#bca95e" stroke-width=".6"/>
 <rect x="139" y="736" width="4" height="2" fill="#3cb043"/><rect x="147" y="738" width="4" height="2" fill="#d94a3a"/><rect x="155" y="740" width="4" height="2" fill="#3c86d8"/>
 <path d="M135 743h32v19h-32z" fill="url(#fo)"/>
 <path d="M142 762v-8h18v8h-4v-4h-10v4z" fill="#8fc8e8"/><path d="M140 754h22l1 3h-24z" fill="#b4dcf2"/>
 <!-- Ai -->
 <rect x="198" y="733" width="29" height="27" fill="#c96a07"/><path d="M198 733l-1 2v24l1 1z" fill="#8a4504"/>
 <text x="212.500" y="753" text-anchor="middle" font-family="Liberation Sans,sans-serif" font-weight="bold" font-size="16" fill="#f9c25a">Ai</text>
 <!-- Ps -->
 <rect x="260" y="733" width="29" height="27" fill="#0b5fa6"/>
 <text x="274.500" y="753" text-anchor="middle" font-family="Liberation Sans,sans-serif" font-weight="bold" font-size="16" fill="#62c4f2">Ps</text>
 <!-- tray -->
 <path d="M1179 751l4-3 4 3z" fill="#fff"/>
 <path d="M1201 742v15" stroke="#fff" stroke-width="1.500"/><path d="M1203 743h10v7h-10z" fill="#fff"/>
 <circle cx="1211" cy="752" r="4.500" fill="#d8333a"/><path d="M1209 750l4 4M1213 750l-4 4" stroke="#fff"/>
 <rect x="1231" y="743" width="9" height="8" fill="none" stroke="#fff" stroke-width="1.500"/><path d="M1235 751v4M1230 756h10" stroke="#fff" stroke-width="1.500"/><rect x="1225" y="742" width="4" height="5" fill="#fff"/><path d="M1227 747v5" stroke="#fff"/>
 <path d="M1249 745h3l4-3v13l-4-3h-3z" fill="#e8e8e8"/><path d="M1258 745c2 2 2 5 0 7M1261 743c3 3 3 8 0 11" fill="none" stroke="#aaa"/>
 <rect x="1352.500" y="729.500" width="13" height="37" fill="#4a3a58" stroke="#a89eb0"/>
</svg>
<div class="t" style="left:1149px;top:739px;font-size:12px;color:#eee">ES</div>
<div class="t" style="left:1283px;top:734px;font-size:12px;color:#fff">11:49 p.m.</div>
<div class="t" style="left:1281px;top:751px;font-size:12px;color:#fff">13/06/2018</div>
</body></html>
